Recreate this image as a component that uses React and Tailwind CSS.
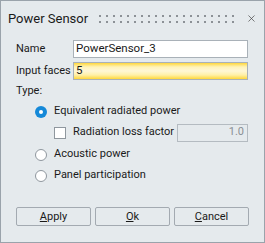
import { X } from "lucide-react";

const font = { fontFamily: 'Roboto, "Liberation Sans", Arial, sans-serif' };

const Grip = () => (
  <svg width="136" height="8" className="block">
    {Array.from({ length: 20 }).map((_, i) => (
      <g key={i} fill="#8c9196">
        <rect x={i * 7} y="0" width="2" height="2" />
        <rect x={i * 7} y="6" width="2" height="2" />
      </g>
    ))}
  </svg>
);

const Radio = ({ checked, label }) => (
  <div className="flex items-center h-[21px]">
    {checked ? (
      <span className="w-[12px] h-[12px] rounded-full bg-[#1589d8] flex items-center justify-center">
        <span className="w-[4px] h-[4px] rounded-full bg-white" />
      </span>
    ) : (
      <span className="w-[12px] h-[12px] rounded-full bg-white border border-[#8f979e]" />
    )}
    <span className="ml-[7px]">{label}</span>
  </div>
);

const Btn = ({ u, rest }) => (
  <button className="w-[75px] h-[19px] border border-[#a3aab1] bg-[#e5eaed] rounded-[2px] text-[11px] text-[#1a1a1a] leading-none">
    <span className="underline underline-offset-1">{u}</span>
    {rest}
  </button>
);

export default function App() {
  return (
    <div
      className="w-[265px] h-[243px] bg-[#e5eaed] border border-[#9aa3ab] flex flex-col text-[11px] text-[#1a1a1a] whitespace-nowrap"
      style={font}
    >
      <div className="h-[35px] flex items-center pl-[7px] pr-[7px]">
        <span className="text-[13px] w-[91px]">Power Sensor</span>
        <Grip />
        <X className="ml-[12px] w-[11px] h-[11px] text-[#404040]" strokeWidth={1.5} />
      </div>
      <div className="px-[15px] flex flex-col">
        <div className="flex items-center mt-[4px]">
          <span className="w-[57px]">Name</span>
          <div className="flex-1 h-[18px] bg-white border border-[#a9b1b8] flex items-center px-[2px] mr-[1px] text-[11.5px]">
            PowerSensor_3
          </div>
        </div>
        <div className="flex items-center mt-[4px]">
          <span className="w-[57px]">Input faces</span>
          <div className="flex-1 h-[18px] border border-[#a9b1b8] flex items-center px-[2px] mr-[1px] text-[11.5px] bg-[linear-gradient(to_bottom,#ffd73c_0%,#fff3b8_25%,#fff7d6_50%,#fff0a8_75%,#ffd73c_100%)]">
            5
          </div>
        </div>
        <div className="h-[20px] flex items-center mt-[1px]">Type:</div>
        <div className="pl-[19px] flex flex-col">
          <Radio checked label="Equivalent radiated power" />
          <div className="flex items-center h-[21px] pl-[19px]">
            <span className="w-[12px] h-[12px] bg-white border border-[#8f979e]" />
            <span className="ml-[7px] w-[104px]">Radiation loss factor</span>
            <div className="w-[71px] h-[18px] border border-[#b4bbc1] bg-[#e5eaed] text-[#8a8f94] flex items-center justify-end pr-[3px]">
              1.0
            </div>
          </div>
          <div className="h-[1px]" />
          <Radio label="Acoustic power" />
          <Radio label="Panel participation" />
        </div>
        <div className="flex gap-[4px] mt-[21px]">
          <Btn u="A" rest="pply" />
          <Btn u="O" rest="k" />
          <Btn u="C" rest="ancel" />
        </div>
      </div>
    </div>
  );
}
